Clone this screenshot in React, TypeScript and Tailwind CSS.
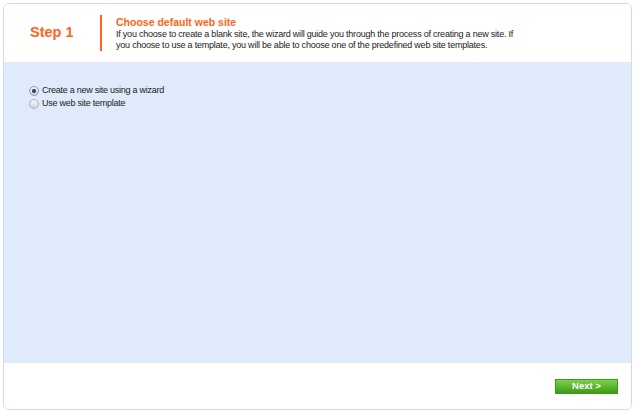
export default function App() {
  return (
    <div className="w-[635px] h-[414px] bg-white p-[3px] pb-[4px]" style={{ fontFamily: '"Liberation Sans", Arial, sans-serif' }}>
      <div className="h-full flex flex-col border border-[#cfdceb] rounded-[6px] overflow-hidden">
        {/* header */}
        <div className="h-[58px] flex items-center bg-white shrink-0">
          <div className="w-[96px] pl-[26px] text-[14.5px] font-bold text-[#ff6418]">Step 1</div>
          <div className="w-[2px] h-[36px] bg-[#ff6418] mr-[14px]" />
          <div className="pt-[1px]">
            <div className="text-[10.5px] font-bold text-[#ff6418] leading-[13px]">Choose default web site</div>
            <div className="text-[9px] tracking-[-0.22px] text-[#222] leading-[11px] whitespace-nowrap">
              If you choose to create a blank site, the wizard will guide you through the process of creating a new site. If
              <br />
              you choose to use a template, you will be able to choose one of the predefined web site templates.
            </div>
          </div>
        </div>
        {/* body */}
        <div className="flex-1 bg-[#dfeafb] pt-[22px] pl-[25px] text-[9px] tracking-[-0.25px] text-[#222]">
          <label className="flex items-center h-[13px] gap-[3px]">
            <span className="w-[10px] h-[10px] rounded-full border border-[#8a9bb0] bg-gradient-to-b from-[#f4f6f8] to-[#c9d3de] flex items-center justify-center">
              <span className="w-[4px] h-[4px] rounded-full bg-[#1d3d66]" />
            </span>
            Create a new site using a wizard
          </label>
          <label className="flex items-center h-[13px] gap-[3px]">
            <span className="w-[10px] h-[10px] rounded-full border border-[#a9b3bd] bg-gradient-to-b from-[#f4f6f8] to-[#d3d8de]" />
            Use web site template
          </label>
        </div>
        {/* footer */}
        <div className="h-[46px] bg-white flex items-center justify-end pr-[13px] shrink-0">
          <button className="w-[63px] h-[15px] border border-[#3f9a16] bg-gradient-to-b from-[#7cd04a] to-[#3c9c12] text-white text-[9.5px] font-bold leading-none">
            Next &gt;
          </button>
        </div>
      </div>
    </div>
  );
}
